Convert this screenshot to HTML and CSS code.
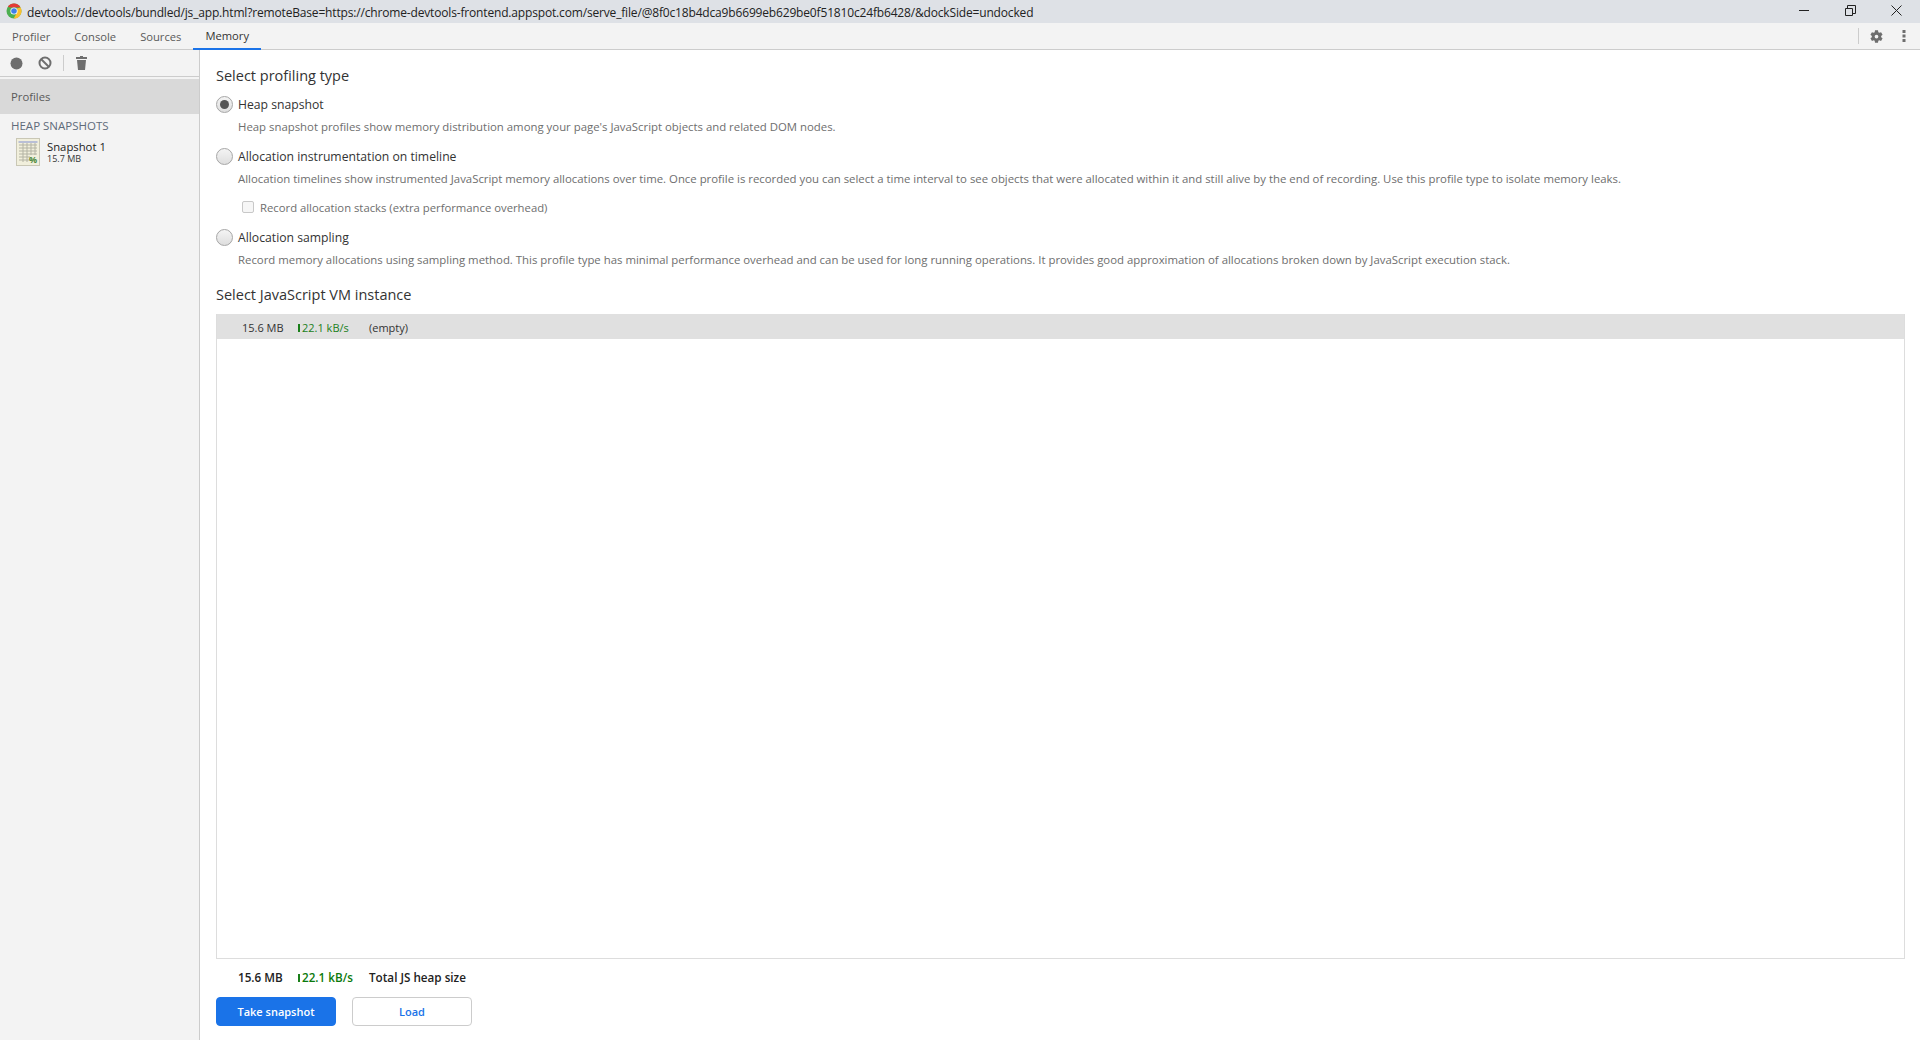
FILE: index.html
```html
<!DOCTYPE html>
<html lang="en">
<head>
<meta charset="utf-8">
<title>DevTools</title>
<link rel="stylesheet" href="styles.css">
</head>
<body>
<header class="titlebar">
  <svg class="chrome-logo" width="16" height="16" viewBox="0 0 16 16">
    <circle cx="8" cy="8" r="7.5" fill="#4caf50"/>
    <path d="M8 .5A7.5 7.5 0 0 1 14.5 4.2L8 4.5H3.9L1.9 3.6A7.5 7.5 0 0 1 8 .5Z" fill="#e53935"/>
    <path d="M14.6 4.4A7.5 7.5 0 0 1 7.6 15.5L11 9.5 11.2 5.3Z" fill="#fbc02d"/>
    <circle cx="8" cy="8" r="3.6" fill="#fff"/>
    <circle cx="8" cy="8" r="2.8" fill="#3f80e8"/>
  </svg>
  <span class="url">devtools://devtools/bundled/js_app.html?remoteBase=https://chrome-devtools-frontend.appspot.com/serve_file/@8f0c18b4dca9b6699eb629be0f51810c24fb6428/&amp;dockSide=undocked</span>
  <div class="win-controls">
    <svg width="11" height="11" viewBox="0 0 11 11"><path d="M0 5.5H10" stroke="#222" fill="none"/></svg>
    <svg width="11" height="11" viewBox="0 0 11 11"><path d="M.5 3.5H7.5V10.5H.5ZM2.5 3.5V.5H10.5V8.5H7.5" stroke="#222" fill="none"/></svg>
    <svg width="11" height="11" viewBox="0 0 11 11"><path d="M.5.5L10.5 10.5M10.5.5L.5 10.5" stroke="#222" fill="none"/></svg>
  </div>
</header>
<nav class="tabbar">
  <a class="tab">Profiler</a>
  <a class="tab">Console</a>
  <a class="tab">Sources</a>
  <a class="tab active">Memory</a>
  <div class="tab-tools">
    <span class="vsep"></span>
    <svg width="15" height="15" viewBox="0 0 24 24"><path fill="#6e6e6e" d="M19.4 13a7.5 7.5 0 0 0 0-2l2.3-1.8-2.4-4.2-2.7 1.1a7.5 7.5 0 0 0-1.7-1L14.4 2H9.6l-.5 3.1a7.5 7.5 0 0 0-1.7 1L4.7 5 2.300 9.200 4.600 11a7.500 7.500 0 0 0 0 2l-2.300 1.800L4.700 19l2.700-1.100a7.500 7.500 0 0 0 1.700 1l.5 3.100h4.800l.5-3.100a7.500 7.500 0 0 0 1.700-1l2.700 1.100 2.400-4.200ZM12 15a3 3 0 1 1 0-6 3 3 0 0 1 0 6Z"/></svg>
    <svg class="dots" width="4" height="14" viewBox="0 0 4 14"><g fill="#6e6e6e"><rect x=".5" y="1" width="3" height="3"/><rect x=".5" y="5.500" width="3" height="3"/><rect x=".5" y="10" width="3" height="3"/></g></svg>
  </div>
</nav>
<div class="workspace">
  <aside class="sidebar">
    <div class="toolbar">
      <svg class="tool-record" width="13" height="13" viewBox="0 0 13 13"><circle cx="6.500" cy="6.500" r="6" fill="#6e6e6e"/></svg>
      <svg class="tool-clear" width="14" height="14" viewBox="0 0 14 14"><circle cx="7" cy="7" r="5.500" fill="none" stroke="#6e6e6e" stroke-width="2"/><path d="M3 3L11 11" stroke="#6e6e6e" stroke-width="2"/></svg>
      <span class="tool-sep"></span>
      <svg class="tool-trash" width="11" height="14" viewBox="0 0 11 14"><path fill="#6e6e6e" d="M4 0H7V1H11V3H0V1H4ZM1 4H10L9 14H2Z"/></svg>
    </div>
    <div class="profiles-item">Profiles</div>
    <div class="group-title">HEAP SNAPSHOTS</div>
    <div class="snapshot">
      <svg class="snap-icon" width="24" height="28" viewBox="0 0 24 28">
        <rect x=".5" y=".5" width="23" height="27" fill="#f1efdc" stroke="#c9c7b5"/>
        <rect x="2.500" y="3" width="19" height="2" fill="#b9bfd6"/>
        <path d="M3 7H21M3 10H21M3 13H21M3 16H21M3 19H14M3 22H14M7 5V24M11 5V24M15 5V17M19 5V17" stroke="#b3b3a4" fill="none"/>
        <text x="13" y="25" class="snap-pct">%</text>
      </svg>
      <div class="snap-text">
        <div class="snap-name">Snapshot 1</div>
        <div class="snap-size">15.7 MB</div>
      </div>
    </div>
  </aside>
  <main class="panel">
    <h2 class="heading">Select profiling type</h2>
    <div class="option"><span class="radio checked"></span><span class="opt-label">Heap snapshot</span></div>
    <p class="desc">Heap snapshot profiles show memory distribution among your page's JavaScript objects and related DOM nodes.</p>
    <div class="option"><span class="radio"></span><span class="opt-label">Allocation instrumentation on timeline</span></div>
    <p class="desc">Allocation timelines show instrumented JavaScript memory allocations over time. Once profile is recorded you can select a time interval to see objects that were allocated within it and still alive by the end of recording. Use this profile type to isolate memory leaks.</p>
    <div class="check-row"><span class="checkbox"></span><span>Record allocation stacks (extra performance overhead)</span></div>
    <div class="option"><span class="radio"></span><span class="opt-label">Allocation sampling</span></div>
    <p class="desc">Record memory allocations using sampling method. This profile type has minimal performance overhead and can be used for long running operations. It provides good approximation of allocations broken down by JavaScript execution stack.</p>
    <h2 class="heading vm-heading">Select JavaScript VM instance</h2>
    <div class="vm-list">
      <div class="vm-row">
        <span class="vm-size">15.6 MB</span>
        <span class="vm-rate"><i class="bar"></i>22.1 kB/s</span>
        <span class="vm-name">(empty)</span>
      </div>
    </div>
    <div class="summary">
      <span class="sum-size">15.6 MB</span>
      <span class="sum-rate"><i class="bar"></i>22.1 kB/s</span>
      <span>Total JS heap size</span>
    </div>
    <div class="actions">
      <button class="btn primary">Take snapshot</button>
      <button class="btn secondary">Load</button>
    </div>
  </main>
</div>
</body>
</html>
```
FILE: styles.css
```css
* { box-sizing: border-box; }
body {
  margin: 0;
  display: flex;
  flex-direction: column;
  height: 1040px;
  overflow: hidden;
  font-family: "Open Sans", "Noto Sans", sans-serif;
  font-size: 11px;
  color: #333;
  background: #fff;
}
.titlebar {
  height: 23px;
  flex: none;
  background: #dee1e6;
  display: flex;
  align-items: center;
  padding-left: 6px;
  color: #222;
}
.chrome-logo { flex: none; margin-bottom: 1px; }
.url { margin-left: 5px; font-size: 12px; white-space: nowrap; letter-spacing: -0.165px; padding-top: 1px; }
.win-controls {
  margin-left: auto;
  display: flex;
  gap: 35px;
  padding-right: 18px;
  margin-bottom: 3px;
}
.tabbar {
  height: 27px;
  flex: none;
  background: #f3f3f3;
  border-bottom: 1px solid #ccc;
  display: flex;
  align-items: stretch;
  color: #5a5a5a;
}
.tab {
  display: flex;
  align-items: center;
  padding: 0 12px;
  font-size: 11.200px;
}
.tab.active { color: #333; border-bottom: 2px solid #1a73e8; margin-bottom: -1px; }
.tab-tools { margin-left: auto; display: flex; align-items: center; padding-right: 14px; }
.vsep { width: 1px; height: 16px; background: #ccc; margin-right: 10px; }
.dots { margin-left: 18px; }
.workspace { flex: 1; display: flex; min-height: 0; }
.sidebar {
  width: 200px;
  flex: none;
  background: #f3f3f3;
  border-right: 1px solid #ccc;
}
.toolbar {
  height: 27px;
  border-bottom: 1px solid #ccc;
  display: flex;
  align-items: center;
  padding-left: 10px;
}
.tool-clear { margin-left: 15px; }
.tool-sep { width: 1px; height: 16px; background: #ccc; margin-left: 11px; }
.tool-trash { margin-left: 12px; }
.profiles-item {
  margin-top: 2px;
  height: 35px;
  background: #d9d9d9;
  display: flex;
  align-items: center;
  padding-left: 11px;
  color: #5a5a5a;
  font-size: 11.300px;
}
.group-title {
  margin-top: 3px;
  padding-left: 11px;
  height: 17px;
  line-height: 17px;
  color: #5f6b7a;
  font-size: 11.500px;
}
.snapshot { display: flex; align-items: center; padding-left: 16px; margin-top: 4px; }
.snap-text { margin-left: 7px; }
.snap-name { font-size: 11.300px; line-height: 12px; color: #222; }
.snap-size { font-size: 9px; line-height: 11px; color: #333; }
.snap-pct { font: bold 9px "Open Sans", sans-serif; fill: #4d8a3c; }
.panel { flex: 1; min-width: 0; display: flex; flex-direction: column; padding: 0 15px 14px 16px; }
.heading { margin: 16px 0 0; font-size: 14.500px; font-weight: 400; line-height: 20px; color: #333; }
.option { display: flex; align-items: center; height: 20px; margin-top: 9px; color: #333; font-size: 12.200px; }
.heading + .option { margin-top: 8px; }
.radio {
  width: 17px;
  height: 17px;
  border-radius: 50%;
  border: 1px solid #a6a6a6;
  background: linear-gradient(#f4f4f4, #dedede);
  flex: none;
  margin-right: 5px;
  position: relative;
}
.radio.checked::after {
  content: "";
  position: absolute;
  left: 3px; top: 3px;
  width: 9px; height: 9px;
  border-radius: 50%;
  background: #555;
}
.desc { margin: 3px 0 0 22px; font-size: 11.390px; line-height: 20px; color: #6e6e6e; white-space: nowrap; }
.check-row { display: flex; align-items: center; height: 20px; margin: 8px 0 0 26px; color: #6e6e6e; font-size: 11.300px; }
.check-row + .option { margin-top: 10px; }
.checkbox { width: 12px; height: 12px; border: 1px solid #c8c8c8; border-radius: 2px; background: #f6f6f6; margin-right: 6px; }
.vm-heading { margin-top: 15px; }
.vm-list { flex: 1; margin-top: 9px; border: 1px solid #ddd; border-top: 0; min-height: 0; }
.vm-row {
  height: 25px;
  background: #e0e0e0;
  display: flex;
  align-items: center;
  padding: 1px 0 0 25px;
  color: #333;
}
.vm-size { width: 56px; }
.vm-rate { width: 71px; color: #1a7f1a; }
.bar { display: inline-block; width: 2px; height: 8px; background: #1a7f1a; margin-right: 2px; }
.summary { display: flex; align-items: center; height: 20px; margin-top: 8px; padding-left: 22px; font-weight: 600; font-size: 11.700px; color: #222; }
.sum-size { width: 60px; }
.sum-rate { width: 71px; color: #0b7a0b; }
.actions { display: flex; gap: 16px; margin-top: 10px; }
.btn { width: 120px; height: 29px; border-radius: 4px; font: 600 11px "Open Sans", sans-serif; }
.primary { background: #1a73e8; border: 1px solid #1a73e8; color: #fff; }
.secondary { background: #fff; border: 1px solid #ccc; color: #1a73e8; }
```
